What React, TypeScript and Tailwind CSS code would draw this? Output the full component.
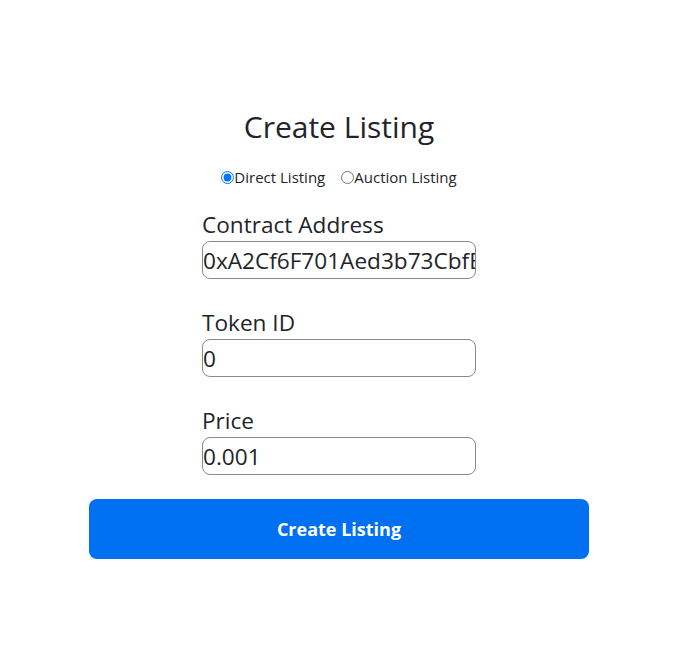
import React, { useState } from 'react';

const fields = [
  { id: 'contract', label: 'Contract Address', value: '0xA2Cf6F701Aed3b73CbfB1F5D2FC7c3F7d1c8C0C5' },
  { id: 'token', label: 'Token ID', value: '0' },
  { id: 'price', label: 'Price', value: '0.001' },
];

export default function App() {
  const [type, setType] = useState('direct');

  return (
    <div className="min-h-[646px] bg-white text-[#212529] font-['Segoe_UI','Open_Sans','Noto_Sans',sans-serif]">
      <div className="flex flex-col items-center pt-[108px]">
        <h1 className="text-[30px] leading-[38px] font-normal">Create Listing</h1>

        <div className="mt-[21px] flex items-center gap-[8px] text-[15px] leading-[20px]">
          <label className="flex items-center">
            <input
              type="radio"
              name="listingType"
              checked={type === 'direct'}
              onChange={() => setType('direct')}
              className="m-0 w-[13px] h-[13px] accent-[#0075ff]"
            />
            <span>Direct Listing</span>
          </label>
          <label className="flex items-center ml-[8px]">
            <input
              type="radio"
              name="listingType"
              checked={type === 'auction'}
              onChange={() => setType('auction')}
              className="m-0 w-[13px] h-[13px] accent-[#0075ff]"
            />
            <span>Auction Listing</span>
          </label>
        </div>

        <div className="mt-[21px] w-[274px] flex flex-col gap-[27px]">
          {fields.map((f) => (
            <div key={f.id} className="flex flex-col">
              <label htmlFor={f.id} className="text-[22.6px] leading-[33px]">
                {f.label}
              </label>
              <input
                id={f.id}
                defaultValue={f.value}
                className="h-[38px] w-full rounded-[8px] border border-[#8a8a8a] px-0 text-[22.6px] text-[#212529] outline-none"
              />
            </div>
          ))}
        </div>

        <button className="mt-[24px] w-[500px] h-[60px] rounded-[8px] bg-[#0070f3] text-white text-[18px] font-bold">
          Create Listing
        </button>
      </div>
    </div>
  );
}
